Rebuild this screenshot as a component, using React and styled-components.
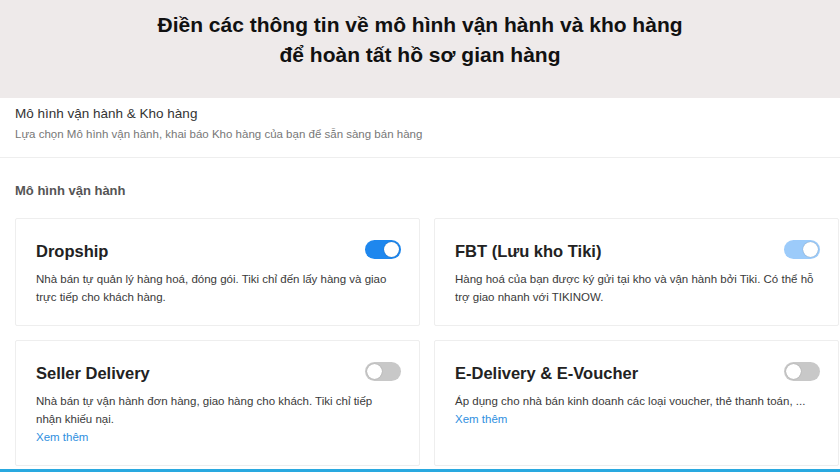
import styled, { createGlobalStyle } from "styled-components";

const Global = createGlobalStyle`
  body {
    margin: 0;
    background: #fff;
    font-family: "Liberation Sans", Arial, sans-serif;
  }
`;

const models = [
  {
    title: "Dropship",
    desc: "Nhà bán tự quản lý hàng hoá, đóng gói. Tiki chỉ đến lấy hàng và giao trực tiếp cho khách hàng.",
    state: "on",
  },
  {
    title: "FBT (Lưu kho Tiki)",
    desc: "Hàng hoá của bạn được ký gửi tại kho và vận hành bởi Tiki. Có thể hỗ trợ giao nhanh với TIKINOW.",
    state: "locked",
  },
  {
    title: "Seller Delivery",
    desc: "Nhà bán tự vận hành đơn hàng, giao hàng cho khách. Tiki chỉ tiếp nhận khiếu nại.",
    state: "off",
    more: true,
  },
  {
    title: "E-Delivery & E-Voucher",
    desc: "Áp dụng cho nhà bán kinh doanh các loại voucher, thẻ thanh toán, ...",
    state: "off",
    more: true,
  },
];

export default function App() {
  return (
    <>
      <Global />
      <Banner>
        <div>Điền các thông tin về mô hình vận hành và kho hàng</div>
        <div>để hoàn tất hồ sơ gian hàng</div>
      </Banner>
      <Header>
        <div className="title">Mô hình vận hành &amp; Kho hàng</div>
        <div className="sub">
          Lựa chọn Mô hình vận hành, khai báo Kho hàng của bạn để sẵn sàng bán hàng
        </div>
      </Header>
      <Section>
        <SectionTitle>Mô hình vận hành</SectionTitle>
        <Grid>
          {models.map((m) => (
            <Card key={m.title}>
              <CardHead>
                <h3>{m.title}</h3>
                <Toggle state={m.state} />
              </CardHead>
              <Desc>{m.desc}</Desc>
              {m.more && <More>Xem thêm</More>}
            </Card>
          ))}
        </Grid>
      </Section>
      <Footer />
    </>
  );
}

const Banner = styled.div`
  height: 98px;
  background: #eeeaea;
  text-align: center;
  font-weight: bold;
  font-size: 21px;
  line-height: 30px;
  color: #111;
  padding-top: 10px;
  box-sizing: border-box;
`;

const Header = styled.div`
  padding: 7px 15px 15px;
  border-bottom: 1px solid #eee;
  .title {
    font-size: 13.5px;
    line-height: 18px;
    color: #333;
  }
  .sub {
    margin-top: 3px;
    font-size: 11.5px;
    line-height: 16px;
    color: #777;
  }
`;

const Section = styled.div`
  padding: 25px 1px 0 15px;
`;

const SectionTitle = styled.div`
  font-size: 13px;
  font-weight: bold;
  color: #555;
  line-height: 16px;
`;

const Grid = styled.div`
  margin-top: 19px;
  display: grid;
  grid-template-columns: 405px 405px;
  column-gap: 14px;
  row-gap: 14px;
`;

const Card = styled.div`
  border: 1px solid #eee;
  border-radius: 2px;
  padding: 20px 18px 19px 20px;
  min-height: 65px;
`;

const CardHead = styled.div`
  display: flex;
  align-items: center;
  justify-content: space-between;
  height: 20px;
  margin-bottom: 11px;
  h3 {
    margin: 0;
    font-size: 16.5px;
    font-weight: bold;
    color: #222;
    line-height: 20px;
    padding-top: 3px;
  }
`;

const Toggle = styled.span`
  position: relative;
  display: inline-block;
  width: 36px;
  height: 19px;
  border-radius: 10px;
  background: ${(p) =>
    p.state === "on" ? "#1e87ee" : p.state === "locked" ? "#9ccbfa" : "#c8c8c8"};
  &::after {
    content: "";
    position: absolute;
    top: 2px;
    left: ${(p) => (p.state === "off" ? "2px" : "19px")};
    width: 15px;
    height: 15px;
    border-radius: 50%;
    background: #fff;
    box-shadow: 0 0 1px rgba(0, 0, 0, 0.4);
  }
`;

const Desc = styled.p`
  margin: 0;
  font-size: 11.5px;
  line-height: 18px;
  color: #3a3a3a;
  padding-right: 5px;
`;

const More = styled.a`
  display: block;
  font-size: 11.5px;
  line-height: 18px;
  color: #2f8fe0;
  cursor: pointer;
`;

const Footer = styled.div`
  margin-top: 3px;
  border-top: 3px solid #29a9e0;
`;
